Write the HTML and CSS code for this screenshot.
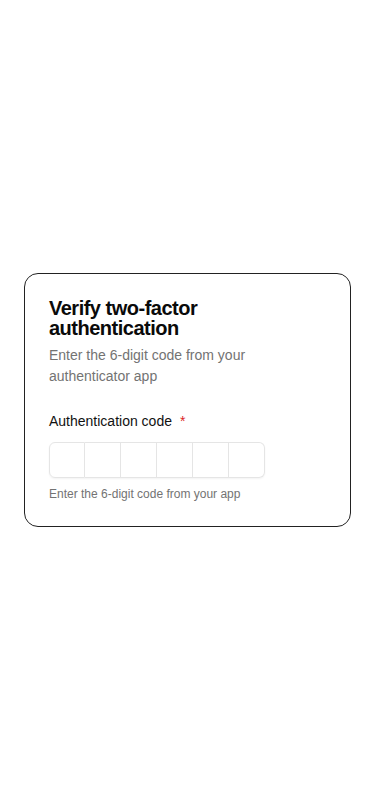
FILE: index.html
```html
<!DOCTYPE html>
<html lang="en">
<head>
    <meta charset="UTF-8">
    <meta name="viewport" content="width=device-width, initial-scale=1.0">
    <title>Verify two-factor authentication</title>
    <link rel="stylesheet" href="styles.css">
</head>
<body>
    <div class="card">
        <h1 class="card-title">Verify two-factor authentication</h1>
        <p class="card-subtitle">Enter the 6-digit code from your authenticator app</p>

        <div class="field">
            <label class="field-label" for="otp-0">Authentication code <span class="required">*</span></label>
            <div class="otp">
                <input class="otp-cell" id="otp-0" type="text" inputmode="numeric" maxlength="1">
                <input class="otp-cell" type="text" inputmode="numeric" maxlength="1">
                <input class="otp-cell" type="text" inputmode="numeric" maxlength="1">
                <input class="otp-cell" type="text" inputmode="numeric" maxlength="1">
                <input class="otp-cell" type="text" inputmode="numeric" maxlength="1">
                <input class="otp-cell" type="text" inputmode="numeric" maxlength="1">
            </div>
            <p class="field-help">Enter the 6-digit code from your app</p>
        </div>
    </div>
</body>
</html>
```

FILE: styles.css
```css
* {
    box-sizing: border-box;
}
html, body {
    height: 100%;
}
body {
    margin: 0;
    padding: 0 24px;
    display: flex;
    align-items: center;
    font-family: "Liberation Sans", Arial, sans-serif;
    background: #fff;
    color: #111;
}
.card {
    width: 100%;
    padding: 24px;
    border: 1px solid #222;
    border-radius: 14px;
    background: #fff;
}
.card-title {
    margin: 0;
    font-size: 20px;
    line-height: 20px;
    font-weight: 700;
    letter-spacing: -0.5px;
    color: #0a0a0a;
}
.card-subtitle {
    margin: 7px 0 0;
    font-size: 14px;
    line-height: 21px;
    color: #737373;
}
.field {
    margin-top: 24px;
}
.field-label {
    display: block;
    font-size: 14px;
    line-height: 20px;
    color: #111;
}
.required {
    margin-left: 4px;
    color: #dc2626;
}
.otp {
    display: inline-flex;
    margin-top: 11px;
    border-radius: 6px;
    box-shadow: 0 1px 2px rgba(0,0,0,0.05);
}
.otp-cell {
    width: 36px;
    height: 36px;
    margin: 0;
    padding: 0;
    border: 1px solid #e5e5e5;
    border-left-width: 0;
    text-align: center;
    font-size: 14px;
    font-family: inherit;
    background: #fff;
    outline: none;
}
.otp-cell:first-child {
    border-left-width: 1px;
    border-radius: 6px 0 0 6px;
}
.otp-cell:last-child {
    border-radius: 0 6px 6px 0;
}
.field-help {
    margin: 8px 0 0;
    font-size: 12px;
    line-height: 16px;
    color: #737373;
}
```
